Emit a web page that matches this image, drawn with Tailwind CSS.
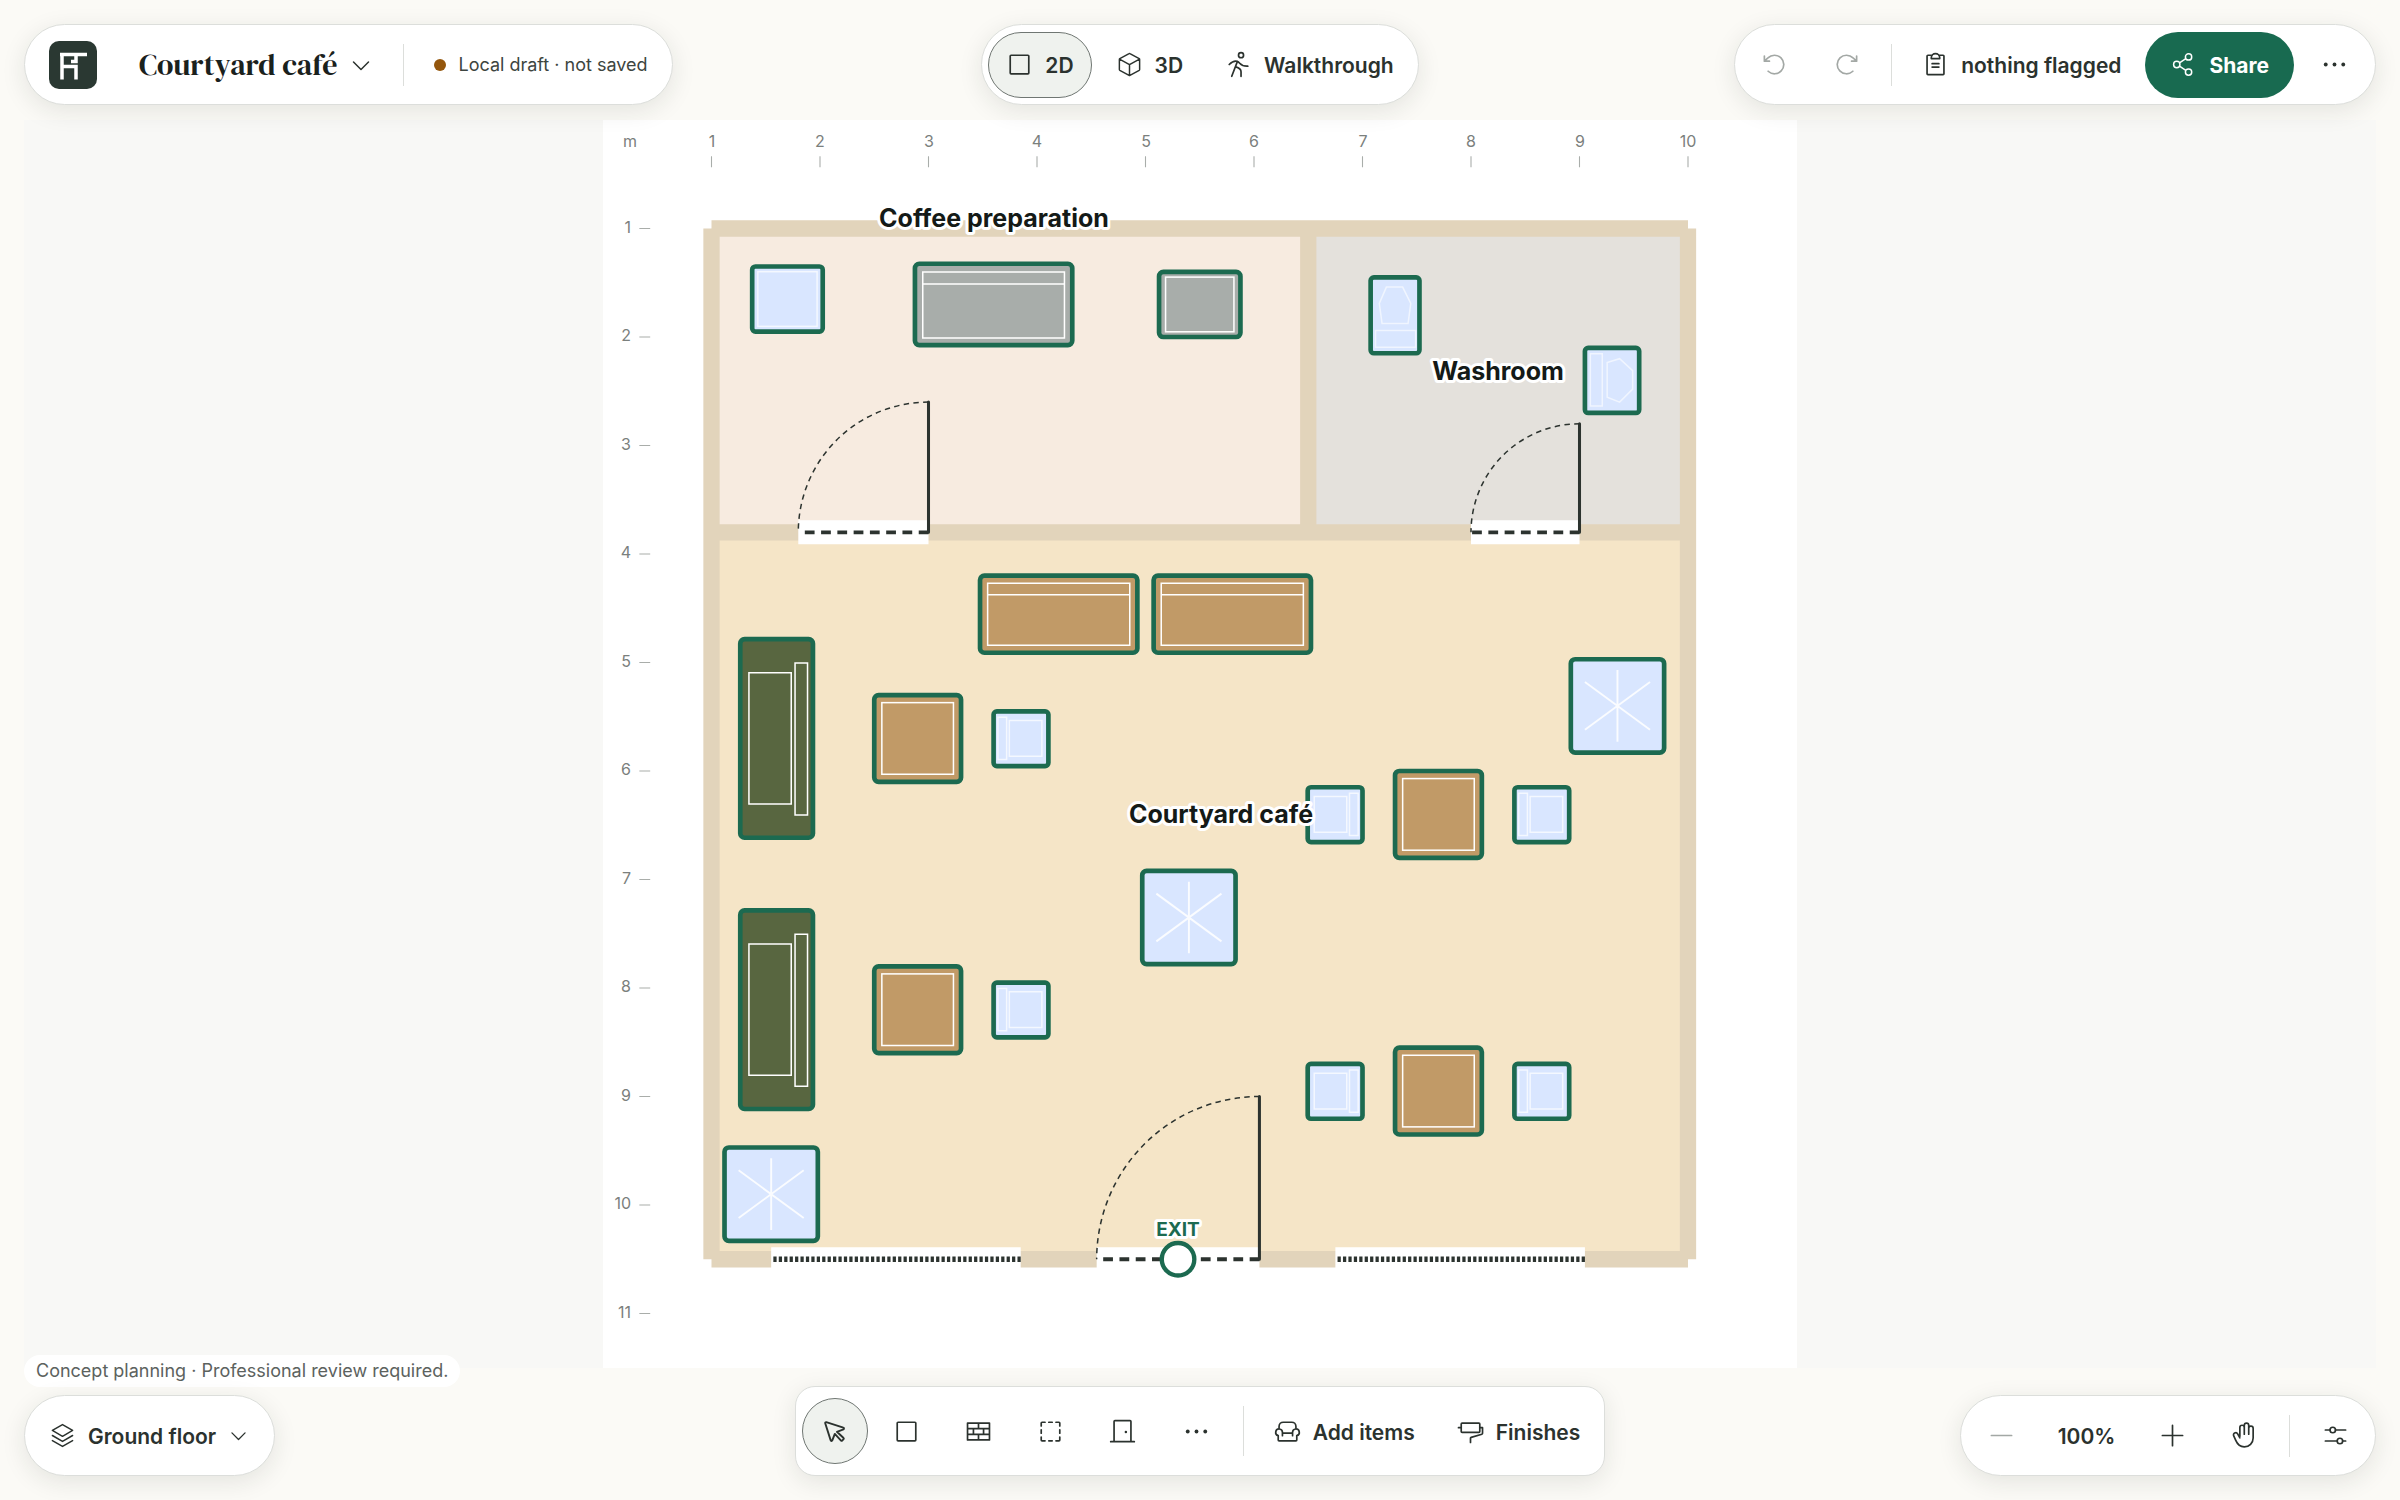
<!DOCTYPE html>
<html lang="en">
<head>
    <meta charset="UTF-8">
    <meta name="viewport" content="width=device-width, initial-scale=1.0">
    <title>Courtyard café - Floor plan</title>
    <script src="https://cdn.jsdelivr.net/npm/@tailwindcss/browser@4"></script>
</head>
<body class="h-screen flex flex-col overflow-hidden bg-[#fbfaf6] font-['Inter',sans-serif] text-[#2b322e]">

    <!-- Shared icons -->
    <svg class="hidden" aria-hidden="true">
        <symbol id="caret" viewBox="0 0 256 256"><path d="M208 96l-80 80-80-80"/></symbol>
        <symbol id="square" viewBox="0 0 256 256"><rect x="40" y="40" width="176" height="176" rx="8"/></symbol>
        <symbol id="dots" viewBox="0 0 256 256"><g fill="currentColor" stroke="none"><circle cx="60" cy="128" r="15"/><circle cx="128" cy="128" r="15"/><circle cx="196" cy="128" r="15"/></g></symbol>
        <symbol id="undo" viewBox="0 0 256 256"><path d="M80 96H32V48M67.600 192A88 88 0 1 0 65.800 65.800L32 96"/></symbol>
    </svg>

    <!-- Top bar -->
    <header class="relative z-10 h-[120px] shrink-0 px-6 pt-6 grid grid-cols-[1fr_auto_1fr] items-start">
        <div class="justify-self-start h-[81px] flex items-center rounded-full border border-[#dcdedb] bg-white px-6 shadow-[0_6px_24px_rgba(30,40,34,0.10)]">
            <a href="#" aria-label="Home" class="block">
                <svg class="size-12" viewBox="0 0 48 48" fill="none">
                    <rect width="48" height="48" rx="10" fill="#2a3832"/>
                    <path d="M11 13.500H38M13 12V38.500M27 14V20.500H22M13 25.500H27V38.500" stroke="#fff" stroke-width="3.500"/>
                </svg>
            </a>
            <button type="button" class="ml-[42px] flex items-center gap-3">
                <span class="font-['DM_Serif_Display','Liberation_Serif',serif] font-normal text-[30px] leading-9 text-[#1a211d]">Courtyard café</span>
                <svg class="size-6" fill="none" stroke="currentColor" stroke-width="16" stroke-linecap="round" stroke-linejoin="round"><use href="#caret"/></svg>
            </button>
            <span class="ml-[30px] w-px h-[42px] bg-[#dcdedb]"></span>
            <p class="ml-[30px] flex items-center gap-3 text-[18px] text-[#3d4540]">
                <span class="size-3 rounded-full bg-[#94560c]"></span>
                Local draft · not saved
            </p>
        </div>

        <nav class="h-[81px] flex items-center gap-[6px] rounded-full border border-[#dcdedb] bg-white px-[6px] text-[21px] font-semibold shadow-[0_6px_24px_rgba(30,40,34,0.10)]">
            <button type="button" aria-pressed="true" class="h-[66px] px-[17px] flex items-center gap-3 rounded-full border border-[#6f7672] bg-[#eff2ee]">
                <svg class="size-[27px]" fill="none" stroke="currentColor" stroke-width="16" stroke-linejoin="round"><use href="#square"/></svg>
                <span class="pt-[3px]">2D</span>
            </button>
            <button type="button" class="h-[66px] px-[18px] flex items-center gap-3 rounded-full">
                <svg class="size-[27px]" viewBox="0 0 256 256" fill="none" stroke="currentColor" stroke-width="14" stroke-linejoin="round">
                    <path d="M33 77l95 52 95-52M128 129v103M132 25l88 48a8 8 0 0 1 4 7v96a8 8 0 0 1-4 7l-88 48a8 8 0 0 1-8 0l-88-48a8 8 0 0 1-4-7V80a8 8 0 0 1 4-7l88-48a8 8 0 0 1 8 0Z"/>
                </svg>
                <span class="pt-[3px]">3D</span>
            </button>
            <button type="button" class="h-[66px] px-[18px] flex items-center gap-3 rounded-full">
                <svg class="size-[27px]" viewBox="0 0 256 256" fill="none" stroke="currentColor" stroke-width="16" stroke-linecap="round" stroke-linejoin="round">
                    <circle cx="152" cy="40" r="24"/>
                    <path d="M40 128c28-28 52-38 76-30 30 10 26 50 100 46M118 98L64 240M102 150c30 8 50 20 50 46v44"/>
                </svg>
                <span class="pt-[3px]">Walkthrough</span>
            </button>
        </nav>

        <div class="justify-self-end h-[81px] flex items-center gap-[6px] rounded-full border border-[#dcdedb] bg-white px-[6px] text-[21px] font-semibold shadow-[0_6px_24px_rgba(30,40,34,0.10)]">
            <button type="button" aria-label="Undo" disabled class="size-[66px] grid place-items-center text-[#a3a8a5]">
                <svg class="size-[27px]" fill="none" stroke="currentColor" stroke-width="16" stroke-linecap="round" stroke-linejoin="round"><use href="#undo"/></svg>
            </button>
            <button type="button" aria-label="Redo" disabled class="size-[66px] grid place-items-center text-[#a3a8a5]">
                <svg class="size-[27px] -scale-x-100" fill="none" stroke="currentColor" stroke-width="16" stroke-linecap="round" stroke-linejoin="round"><use href="#undo"/></svg>
            </button>
            <span class="mx-[6px] w-px h-[42px] bg-[#dcdedb]"></span>
            <button type="button" class="h-[66px] px-[18px] flex items-center gap-3 rounded-full">
                <svg class="size-[27px]" viewBox="0 0 256 256" fill="none" stroke="currentColor" stroke-width="16" stroke-linecap="round" stroke-linejoin="round">
                    <path d="M96 152h64M96 120h64M160 40h40a8 8 0 0 1 8 8v168a8 8 0 0 1-8 8H56a8 8 0 0 1-8-8V48a8 8 0 0 1 8-8h40M88 72v-8a40 40 0 0 1 80 0v8Z"/>
                </svg>
                <span class="pt-[3px]">nothing flagged</span>
            </button>
            <button type="button" class="h-[66px] px-[25px] flex items-center gap-3 rounded-full bg-[#186a50] font-bold text-white">
                <svg class="size-[27px]" viewBox="0 0 256 256" fill="none" stroke="currentColor" stroke-width="14">
                    <circle cx="64" cy="128" r="30"/><circle cx="176" cy="200" r="30"/><circle cx="176" cy="56" r="30"/>
                    <path d="M90 144l60 39M150 73l-60 39"/>
                </svg>
                <span class="pt-[3px]">Share</span>
            </button>
            <button type="button" aria-label="More" class="w-[69px] h-[66px] grid place-items-center">
                <svg class="size-[33px]"><use href="#dots"/></svg>
            </button>
        </div>
    </header>

    <!-- Floor plan, drawn in pixels with the geometry group in centimetres -->
    <main class="flex-1 min-h-0 mx-6 bg-[#f8f8f6]">
        <svg class="size-full" viewBox="0 0 1194 1248" role="img" aria-label="Floor plan">
            <defs>
                <g id="table">
                    <rect width="80" height="80" rx="4" fill="#c19a67" stroke="#1c6a50" stroke-width="4.300"/>
                    <rect x="7" y="7" width="66" height="66" fill="none" stroke="#fff" stroke-width="1.400"/>
                </g>
                <g id="chair">
                    <rect width="50.500" height="50.500" rx="3" fill="#d9e6ff" stroke="#1c6a50" stroke-width="4.300"/>
                    <path d="M4 5.500h8v39h-8zM14.500 8.500h30v33h-30z" fill="none" stroke="#fff" stroke-opacity=".7" stroke-width="1.400"/>
                </g>
                <g id="plant">
                    <rect x="-43" y="-43" width="86" height="86" rx="4" fill="#d9e6ff" stroke="#1c6a50" stroke-width="4.300"/>
                    <path d="M0-33V33M-30-22L30 22M-30 22L30-22" stroke="#fff" stroke-opacity=".85" stroke-width="1.800"/>
                </g>
                <g id="counter">
                    <rect width="145" height="71" rx="4" fill="#c19a67" stroke="#1c6a50" stroke-width="4.300"/>
                    <path d="M7 7h131v57H7zM7 17.500h131" fill="none" stroke="#fff" stroke-width="1.400"/>
                </g>
                <g id="bench">
                    <rect width="67" height="183" rx="4" fill="#586640" stroke="#1c6a50" stroke-width="4.300"/>
                    <path d="M8 31h39v121H8zM50.500 22h11.500v140H50.500z" fill="none" stroke="#fff" stroke-width="1.400"/>
                </g>
            </defs>

            <rect width="1194" height="1248" fill="#fff"/>

            <g transform="scale(1.085)">
                <!-- Rooms -->
                <rect x="100" y="100" width="550" height="280" fill="#f7ebe0"/>
                <rect x="650" y="100" width="350" height="280" fill="#e4e1dc"/>
                <rect x="100" y="380" width="900" height="670" fill="#f5e5c7"/>

                <!-- Walls -->
                <path d="M100 100H1000M1000 100V1050M1000 1050H100M100 1050V100M100 380H1000M650 100V380" stroke="#e2d4bb" stroke-width="15"/>

                <!-- Openings -->
                <path d="M180 380H300M800 380H900M455 1050H605M155 1050H385M675 1050H905" stroke="#fff" stroke-width="22"/>
                <path d="M300 380H180M900 380H800M605 1050H455" stroke="#2c332f" stroke-width="3.500" stroke-dasharray="9 6"/>
                <path d="M385 1050H155M905 1050H675" stroke="#2c332f" stroke-width="5" stroke-dasharray="3 2"/>
                <path d="M300 380V260M900 380V280M605 1050V900" stroke="#2c332f" stroke-width="2.800" stroke-linecap="round"/>
                <path d="M300 260A120 120 0 0 0 180 380M900 280A100 100 0 0 0 800 380M605 900A150 150 0 0 0 455 1050" fill="none" stroke="#2c332f" stroke-width="1.400" stroke-dasharray="5 4"/>

                <!-- Coffee preparation -->
                <rect x="137.500" y="135" width="65" height="60" rx="3" fill="#d9e6ff" stroke="#1c6a50" stroke-width="4.300"/>
                <rect x="142.700" y="139.800" width="54.600" height="50.400" fill="none" stroke="#fff" stroke-opacity=".7" stroke-width="1.400"/>
                <rect x="287.500" y="132.500" width="145" height="75" rx="4" fill="#a8adaa" stroke="#1c6a50" stroke-width="4.300"/>
                <path d="M294.700 140h130.600v61H294.700zM294.700 151.200h130.600" fill="none" stroke="#fff" stroke-width="1.400"/>
                <rect x="512.500" y="140" width="75" height="60" rx="4" fill="#a8adaa" stroke="#1c6a50" stroke-width="4.300"/>
                <rect x="518.500" y="144.800" width="63" height="50.400" fill="none" stroke="#fff" stroke-width="1.400"/>

                <!-- Washroom -->
                <rect x="707.500" y="145" width="45" height="70" rx="3" fill="#d9e6ff" stroke="#1c6a50" stroke-width="4.300"/>
                <path d="M722 154h15l7.500 15-2.500 18.500h-24l-2.500-18.500zM712 194h37v15.500h-37z" fill="none" stroke="#fff" stroke-opacity=".6" stroke-width="1.400"/>
                <rect x="905" y="210" width="50" height="60" rx="3" fill="#d9e6ff" stroke="#1c6a50" stroke-width="4.300"/>
                <path d="M910 215.500h11v48h-11zM925.500 223.500l11.500-3.500 12 11v17l-12 12-11.500-4.500z" fill="none" stroke="#fff" stroke-opacity=".6" stroke-width="1.400"/>

                <!-- Courtyard café -->
                <use href="#counter" x="347.500" y="420"/>
                <use href="#counter" x="507.500" y="420"/>
                <use href="#bench" x="126.500" y="478.500"/>
                <use href="#bench" x="126.500" y="728.500"/>
                <use href="#table" x="250" y="530"/>
                <use href="#table" x="250" y="780"/>
                <use href="#table" x="730" y="600"/>
                <use href="#table" x="730" y="855"/>
                <use href="#chair" x="360" y="545"/>
                <use href="#chair" x="360" y="795"/>
                <use href="#chair" x="840" y="615"/>
                <use href="#chair" x="840" y="870"/>
                <use href="#chair" transform="translate(700 615) scale(-1 1)"/>
                <use href="#chair" transform="translate(700 870) scale(-1 1)"/>
                <use href="#plant" x="935" y="540"/>
                <use href="#plant" x="540" y="735"/>
                <use href="#plant" x="155" y="990"/>

                <circle cx="530" cy="1050" r="15" fill="#fff" stroke="#1c6a50" stroke-width="4"/>

                <!-- Ruler ticks -->
                <path d="M100 33.500v10M200 33.500v10M300 33.500v10M400 33.500v10M500 33.500v10M600 33.500v10M700 33.500v10M800 33.500v10M900 33.500v10M1000 33.500v10M33.500 100h10M33.500 200h10M33.500 300h10M33.500 400h10M33.500 500h10M33.500 600h10M33.500 700h10M33.500 800h10M33.500 900h10M33.500 1000h10M33.500 1100h10" stroke="#a9adaa" stroke-width="1"/>
            </g>

            <!-- Ruler labels -->
            <g class="text-[16px]" fill="#7b807d" text-anchor="middle">
                <text x="27" y="27">m</text>
                <text x="109" y="27">1</text>
                <text x="217" y="27">2</text>
                <text x="326" y="27">3</text>
                <text x="434" y="27">4</text>
                <text x="543" y="27">5</text>
                <text x="651" y="27">6</text>
                <text x="760" y="27">7</text>
                <text x="868" y="27">8</text>
                <text x="977" y="27">9</text>
                <text x="1085" y="27">10</text>
            </g>
            <g class="text-[16px]" fill="#7b807d" text-anchor="end">
                <text x="28" y="113">1</text>
                <text x="28" y="221">2</text>
                <text x="28" y="330">3</text>
                <text x="28" y="438">4</text>
                <text x="28" y="547">5</text>
                <text x="28" y="655">6</text>
                <text x="28" y="764">7</text>
                <text x="28" y="872">8</text>
                <text x="28" y="981">9</text>
                <text x="28" y="1089">10</text>
                <text x="28" y="1198">11</text>
            </g>

            <!-- Room names -->
            <g class="text-[25px] font-bold" fill="#141a17" stroke="#fff" stroke-width="6" stroke-linejoin="round" paint-order="stroke" text-anchor="middle">
                <text x="391" y="107">Coffee preparation</text>
                <text x="895" y="260">Washroom</text>
                <text x="618" y="703">Courtyard café</text>
            </g>
            <text class="text-[19px] font-bold" x="575" y="1116" fill="#1c6a50" stroke="#fff" stroke-width="6" stroke-linejoin="round" paint-order="stroke" text-anchor="middle">EXIT</text>
        </svg>
    </main>

    <!-- Bottom bar -->
    <footer class="relative z-10 h-[132px] shrink-0 px-6 pb-6 grid grid-cols-[1fr_auto_1fr] items-end content-end text-[21px] font-semibold">
        <div class="justify-self-start flex flex-col items-start gap-2">
            <p class="rounded-full bg-white px-3 h-8 flex items-center text-[18px] leading-7 font-normal text-[#5c625e]">Concept planning · Professional review required.</p>
            <label class="relative h-[81px] flex items-center rounded-full border border-[#dcdedb] bg-white shadow-[0_6px_24px_rgba(30,40,34,0.10)]">
                <svg class="absolute left-6 size-[27px] pointer-events-none" viewBox="0 0 256 256" fill="none" stroke="currentColor" stroke-width="14" stroke-linecap="round" stroke-linejoin="round">
                    <path d="M32 80l96 56 96-56-96-56ZM32 128l96 56 96-56M32 176l96 56 96-56"/>
                </svg>
                <select aria-label="Floor" class="appearance-none bg-transparent h-full rounded-full pt-[3px] pl-[63px] pr-[57px]">
                    <option>Ground floor</option>
                </select>
                <svg class="absolute right-[25px] size-[21px] pointer-events-none" fill="none" stroke="currentColor" stroke-width="16" stroke-linecap="round" stroke-linejoin="round"><use href="#caret"/></svg>
            </label>
        </div>

        <div class="h-[90px] flex items-center gap-[6px] rounded-[20px] border border-[#dcdedb] bg-white px-[6px] shadow-[0_6px_24px_rgba(30,40,34,0.10)]">
            <button type="button" aria-label="Select" aria-pressed="true" class="size-[66px] grid place-items-center rounded-full border border-[#6f7672] bg-[#eff2ee]">
                <svg class="size-[27px]" viewBox="0 0 256 256" fill="none" stroke="currentColor" stroke-width="18" stroke-linejoin="round">
                    <path d="M151 131l62-24a8 8 0 0 0-1-15L50 40a8 8 0 0 0-10 10l52 162a8 8 0 0 0 15 1l24-62 59 63a8 8 0 0 0 11 0l13-13a8 8 0 0 0 0-11Z"/>
                </svg>
            </button>
            <button type="button" aria-label="Room" class="size-[66px] grid place-items-center">
                <svg class="size-[27px]" fill="none" stroke="currentColor" stroke-width="16" stroke-linejoin="round"><use href="#square"/></svg>
            </button>
            <button type="button" aria-label="Wall" class="size-[66px] grid place-items-center">
                <svg class="size-[27px]" viewBox="0 0 256 256" fill="none" stroke="currentColor" stroke-width="16" stroke-linejoin="round">
                    <path d="M24 48h208v160H24zM24 101h208M24 155h208M128 48v53M80 101v54M176 101v54M128 155v53"/>
                </svg>
            </button>
            <button type="button" aria-label="Area" class="size-[66px] grid place-items-center">
                <svg class="size-[27px]" viewBox="0 0 256 256" fill="none" stroke="currentColor" stroke-width="16" stroke-linecap="round" stroke-linejoin="round">
                    <path d="M76 40H48a8 8 0 0 0-8 8v28M180 40h28a8 8 0 0 1 8 8v28M76 216H48a8 8 0 0 1-8-8v-28M180 216h28a8 8 0 0 0 8-8v-28M112 40h32M112 216h32M40 112v32M216 112v32"/>
                </svg>
            </button>
            <button type="button" aria-label="Door" class="size-[66px] grid place-items-center">
                <svg class="size-[27px]" viewBox="0 0 256 256" fill="none" stroke="currentColor" stroke-width="16" stroke-linecap="round" stroke-linejoin="round">
                    <path d="M16 224h224M48 224V32a8 8 0 0 1 8-8h144a8 8 0 0 1 8 8v192"/><circle cx="160" cy="132" r="12" fill="currentColor" stroke="none"/>
                </svg>
            </button>
            <button type="button" aria-label="More tools" class="w-[69px] h-[66px] grid place-items-center">
                <svg class="size-[33px]"><use href="#dots"/></svg>
            </button>
            <span class="mx-[6px] w-px h-[50px] bg-[#dcdedb]"></span>
            <button type="button" class="h-[66px] px-[18px] flex items-center gap-3">
                <svg class="size-[27px]" viewBox="0 0 256 256" fill="none" stroke="currentColor" stroke-width="16" stroke-linecap="round" stroke-linejoin="round">
                    <path d="M80 168v-32a32 32 0 1 0-40 31v41a8 8 0 0 0 8 8h160a8 8 0 0 0 8-8v-41a32 32 0 1 0-40-31v32M80 144h96M48 104V80a40 40 0 0 1 40-40h80a40 40 0 0 1 40 40v24"/>
                </svg>
                <span class="pt-[3px]">Add items</span>
            </button>
            <button type="button" class="h-[66px] px-[18px] flex items-center gap-3">
                <svg class="size-[27px]" viewBox="0 0 256 256" fill="none" stroke="currentColor" stroke-width="16" stroke-linecap="round" stroke-linejoin="round">
                    <rect x="40" y="48" width="176" height="88" rx="8"/>
                    <path d="M40 92H14M216 92h26v54a8 8 0 0 1-6 8l-102 30a8 8 0 0 0-6 8v40"/>
                </svg>
                <span class="pt-[3px]">Finishes</span>
            </button>
        </div>

        <div class="justify-self-end h-[81px] flex items-center gap-[6px] rounded-full border border-[#dcdedb] bg-white px-[7px] shadow-[0_6px_24px_rgba(30,40,34,0.10)]">
            <button type="button" aria-label="Zoom out" disabled class="size-[66px] grid place-items-center text-[#a3a8a5]">
                <svg class="size-[27px]" viewBox="0 0 256 256" stroke="currentColor" stroke-width="16" stroke-linecap="round"><path d="M32 128h192"/></svg>
            </button>
            <button type="button" class="w-[93px] h-[66px] pt-[3px]">100%</button>
            <button type="button" aria-label="Zoom in" class="size-[66px] grid place-items-center">
                <svg class="size-[27px]" viewBox="0 0 256 256" stroke="currentColor" stroke-width="16" stroke-linecap="round"><path d="M32 128h192M128 32v192"/></svg>
            </button>
            <button type="button" aria-label="Pan" class="size-[66px] grid place-items-center">
                <svg class="size-[27px]" viewBox="0 0 256 256" fill="none" stroke="currentColor" stroke-width="16" stroke-linecap="round" stroke-linejoin="round">
                    <path d="M84 136V52a21 21 0 0 1 42 0v64M126 112V32a21 21 0 0 1 42 0v84M168 112V60a21 21 0 0 1 42 0v92a84 84 0 0 1-84 84c-46 0-66-26-82-64l-18-40a21 21 0 0 1 37-20l21 38"/>
                </svg>
            </button>
            <span class="mx-[6px] w-px h-[42px] bg-[#dcdedb]"></span>
            <button type="button" aria-label="View settings" class="size-[66px] grid place-items-center">
                <svg class="size-[27px]" viewBox="0 0 256 256" fill="none" stroke="currentColor" stroke-width="16" stroke-linecap="round">
                    <path d="M32 76h44M128 76h96M32 180h112M196 180h28"/><circle cx="102" cy="76" r="26"/><circle cx="170" cy="180" r="26"/>
                </svg>
            </button>
        </div>
    </footer>
</body>
</html>
